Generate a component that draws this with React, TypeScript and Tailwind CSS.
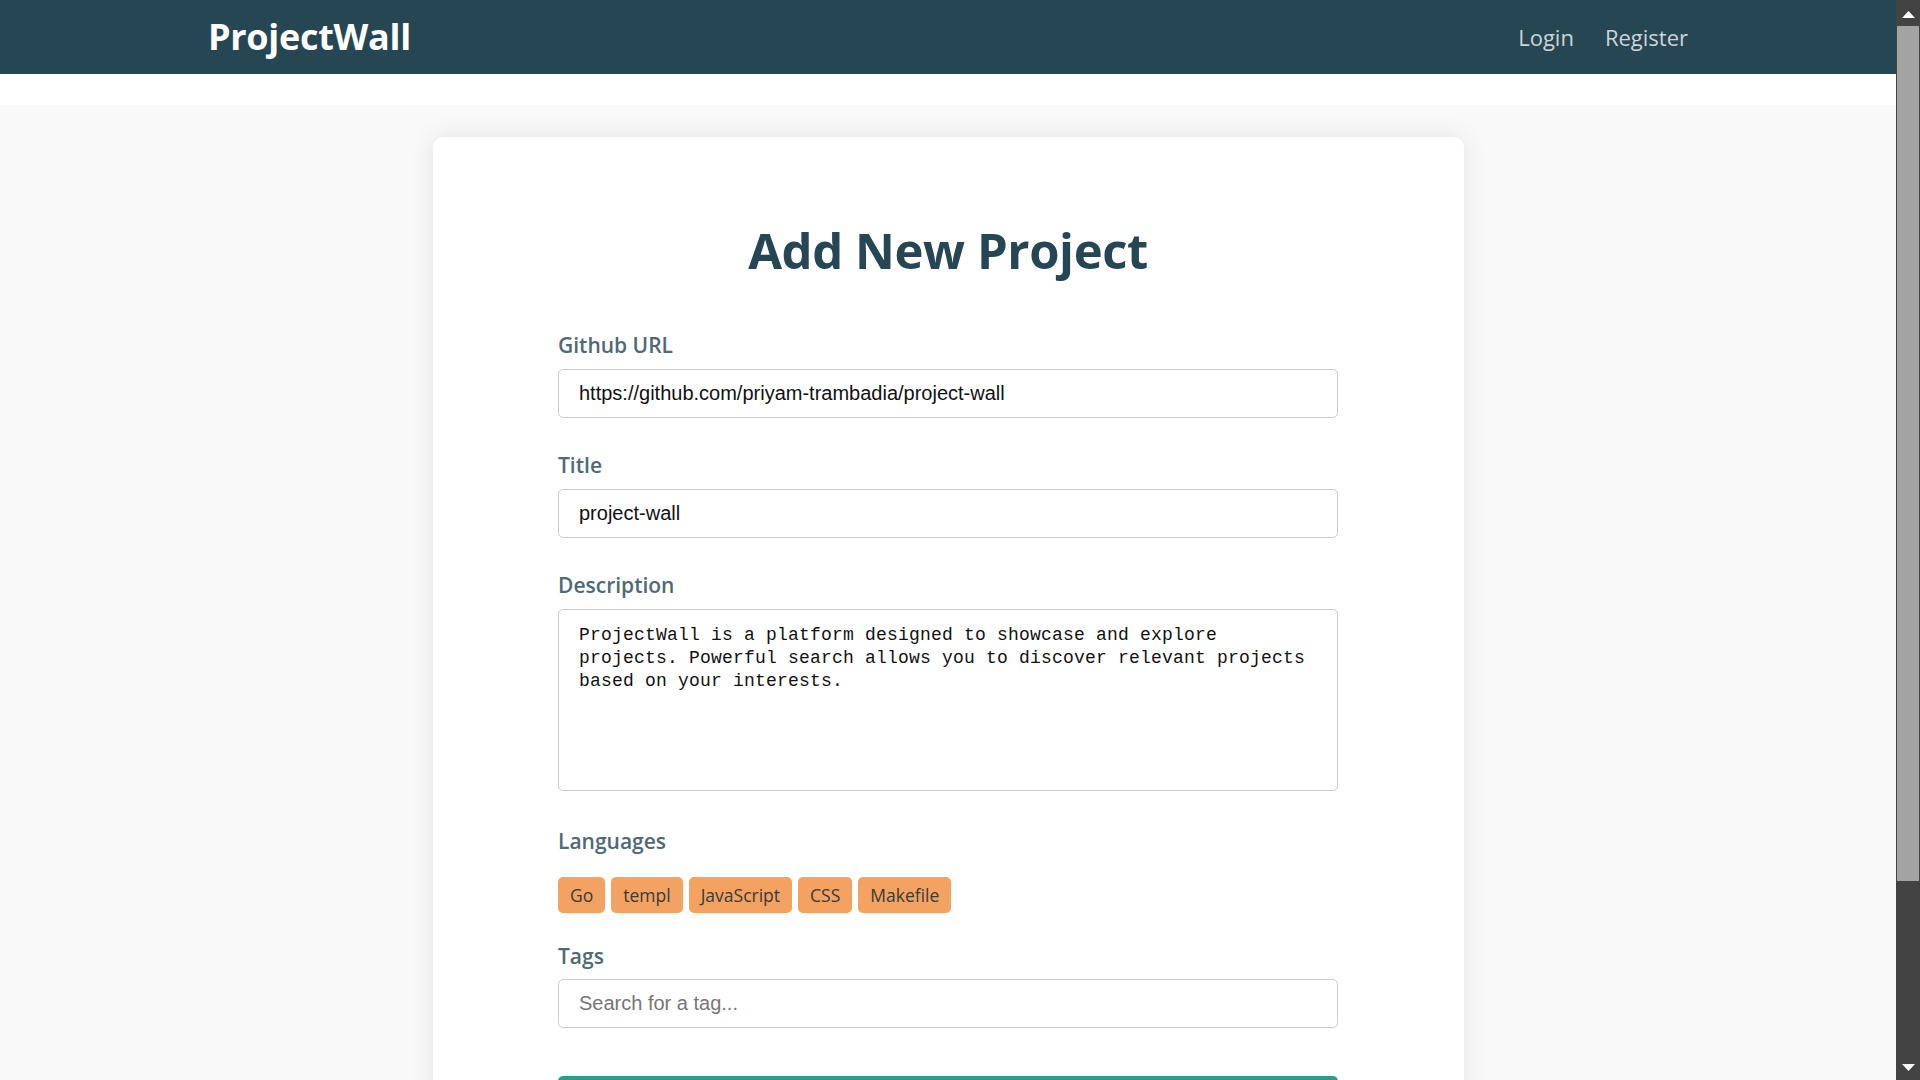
import React from "react";

const sans = { fontFamily: '"Open Sans", "Noto Sans", sans-serif' };

function Label({ children, className = "" }: { children: React.ReactNode; className?: string }) {
  return (
    <label className={`block text-[21px] leading-[30px] font-semibold text-[#4f6975] ${className}`}>
      {children}
    </label>
  );
}

export default function App() {
  const langs = ["Go", "templ", "JavaScript", "CSS", "Makefile"];
  return (
    <div className="flex h-screen w-full overflow-hidden bg-white" style={sans}>
      <div className="flex min-w-0 flex-1 flex-col">
        <nav className="flex h-[74px] shrink-0 items-center justify-between bg-[#264653] pl-[208px] pr-[208px]">
          <div className="text-[36px] font-bold leading-none tracking-[-0.3px] text-white">ProjectWall</div>
          <div className="flex items-center gap-[31px] text-[22px] text-[#cdd4d8]">
            <a>Login</a>
            <a>Register</a>
          </div>
        </nav>
        <div className="flex flex-1 flex-col bg-white pt-[31px]">
          <div className="flex flex-1 justify-center bg-[#f9f9f9] pt-[32px]">
            <div className="w-[1031px] rounded-t-[10px] bg-white pt-[84px] shadow-[0_0_26px_rgba(0,0,0,0.09)]">
              <div className="mx-auto w-[780px]">
                <h1 className="text-center text-[49px] font-bold leading-[1.2] tracking-[-0.4px] text-[#264653]">
                  Add New Project
                </h1>
                <div className="mt-[50px]">
                  <Label>Github URL</Label>
                  <input
                    readOnly
                    value="https://github.com/priyam-trambadia/project-wall"
                    className="mt-[9px] block h-[49px] w-full rounded-[5px] border border-[#cccccc] bg-white px-[20px] text-[20px] text-[#111] outline-none"
                    style={{ fontFamily: '"Liberation Sans", Arial, sans-serif' }}
                  />
                </div>
                <div className="mt-[32px]">
                  <Label>Title</Label>
                  <input
                    readOnly
                    value="project-wall"
                    className="mt-[9px] block h-[49px] w-full rounded-[5px] border border-[#cccccc] bg-white px-[20px] text-[20px] text-[#111] outline-none"
                    style={{ fontFamily: '"Liberation Sans", Arial, sans-serif' }}
                  />
                </div>
                <div className="mt-[32px]">
                  <Label>Description</Label>
                  <textarea
                    readOnly
                    value="ProjectWall is a platform designed to showcase and explore projects. Powerful search allows you to discover relevant projects based on your interests."
                    className="mt-[9px] block h-[182px] w-full resize-none rounded-[5px] border border-[#cccccc] bg-white px-[20px] pt-[14px] text-[18px] leading-[23.3px] tracking-[0.2px] text-[#111] outline-none"
                    style={{ fontFamily: '"Liberation Mono", "DejaVu Sans Mono", monospace' }}
                  />
                </div>
                <div className="mt-[35px]">
                  <Label>Languages</Label>
                  <div className="mt-[21px] flex gap-[6px]">
                    {langs.map((l) => (
                      <span
                        key={l}
                        className="flex h-[36px] items-center rounded-[5px] bg-[#f4a261] px-[12px] text-[17.5px] font-medium text-[#3a3a3a]"
                      >
                        {l}
                      </span>
                    ))}
                  </div>
                </div>
                <div className="mt-[28px]">
                  <Label>Tags</Label>
                  <input
                    placeholder="Search for a tag..."
                    className="mt-[8px] block h-[49px] w-full rounded-[5px] border border-[#cccccc] bg-white px-[20px] text-[20px] text-[#111] outline-none placeholder:text-[#767676]"
                    style={{ fontFamily: '"Liberation Sans", Arial, sans-serif' }}
                  />
                </div>
                <button
                  aria-label="Add Project"
                  className="mt-[48px] block h-[52px] w-full rounded-[5px] bg-[#2a9d8f]"
                />
              </div>
            </div>
          </div>
        </div>
      </div>
      <div className="flex w-[24px] shrink-0 flex-col bg-[#434343]">
        <div className="flex h-[26px] items-start justify-center pt-[11px]">
          <svg width="13" height="7" viewBox="0 0 13 7">
            <polygon points="6.5,0 13,7 0,7" fill="#ffffff" />
          </svg>
        </div>
        <div className="ml-[1px] mr-[1px] h-[855px] bg-[#a3a3a3]" />
        <div className="flex flex-1 items-end justify-center pb-[9px]">
          <svg width="13" height="7" viewBox="0 0 13 7">
            <polygon points="0,0 13,0 6.5,7" fill="#ffffff" />
          </svg>
        </div>
      </div>
    </div>
  );
}
